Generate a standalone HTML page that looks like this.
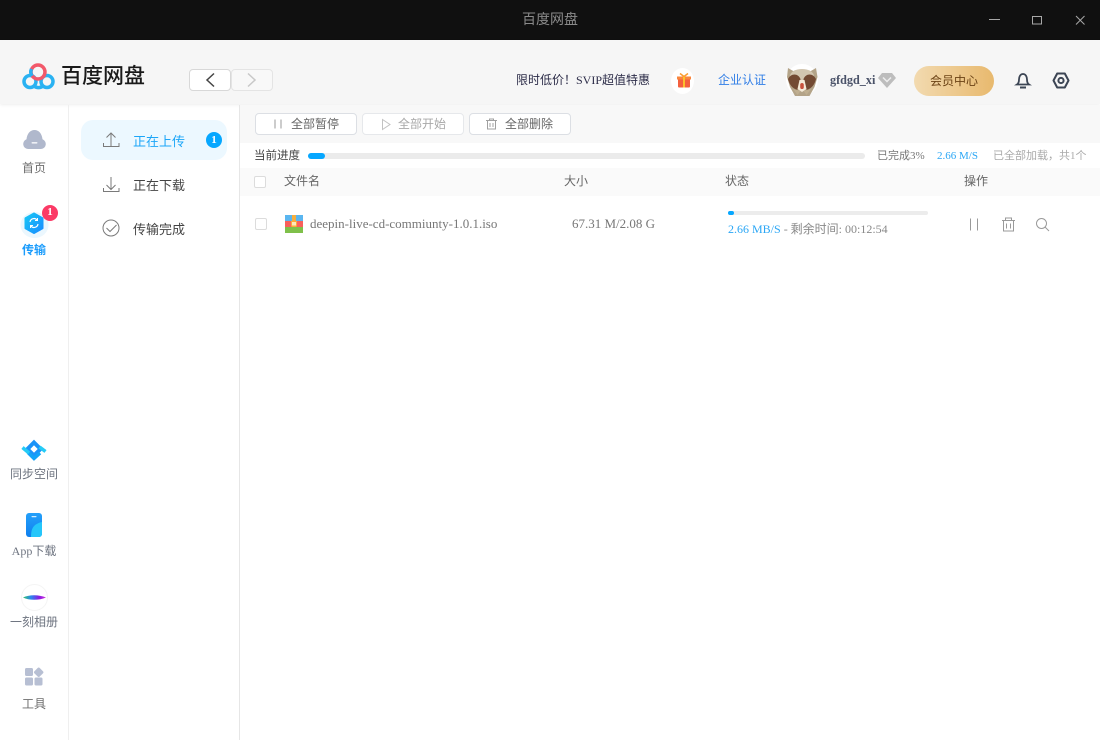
<!DOCTYPE html>
<html><head><meta charset="utf-8">
<style>
*{box-sizing:border-box;margin:0;padding:0}
html,body{width:1100px;height:740px;overflow:hidden;background:#fff}
body{position:relative;font-family:"Liberation Serif","Noto Sans CJK SC",serif;font-size:12px;color:#666}
.a{position:absolute;white-space:nowrap}
.t{position:absolute;white-space:nowrap;line-height:16px}
svg{position:absolute;overflow:visible}
.btn{position:absolute;top:113px;height:22px;width:102px;border:1px solid #dcdfe4;border-radius:4px;background:#fff}
.cb{position:absolute;width:12px;height:12px;border:1px solid #dcdcdc;border-radius:2px;background:#fff}
</style></head><body>
<!-- titlebar -->
<div class="a" style="left:0;top:0;width:1100px;height:40px;background:#101010"></div>
<div class="t" style="left:0;width:1100px;top:11px;text-align:center;font-size:14px;line-height:20px;color:#8a8a8a">百度网盘</div>
<svg style="left:0;top:0" width="1100" height="40" fill="none" stroke="#a8a8a8" stroke-width="1">
<path d="M989 19.500h11"/><rect x="1032.500" y="16.500" width="9" height="7.500"/><path d="M1076 16l8.500 8.500M1084.500 16l-8.500 8.500"/>
</svg>
<!-- header -->
<div class="a" style="left:0;top:40px;width:1100px;height:64px;background:#f6f6f6;box-shadow:0 1px 3px rgba(0,0,0,.07)"></div>
<svg style="left:0;top:0" width="70" height="100" fill="none">
<circle cx="30" cy="81.500" r="6" stroke="#2ab2f2" stroke-width="3.500"/>
<circle cx="47" cy="81.500" r="6" stroke="#2ab2f2" stroke-width="3.500"/>
<path d="M34 86a7 7 0 0 0 9 0" stroke="#2ab2f2" stroke-width="3.500"/>
<circle cx="38" cy="72" r="7" stroke="#f2596a" stroke-width="3.500"/>
<path d="M31.500 69a7 7 0 0 0 0.500 7" stroke="#2ab2f2" stroke-width="3.500"/>
</svg>
<div class="t" style="left:61px;top:61px;font-size:21px;line-height:28px;font-weight:500;color:#1a1a1a;font-family:'Noto Sans CJK SC',sans-serif">百度网盘</div>
<div class="a" style="left:189px;top:69px;width:42px;height:22px;background:#fff;border:1px solid #d8d8d8;border-radius:4px"></div>
<div class="a" style="left:231px;top:69px;width:42px;height:22px;background:#f8f8f8;border:1px solid #e4e4e4;border-radius:4px"></div>
<svg style="left:0;top:0" width="300" height="100" fill="none" stroke-width="1.500">
<path d="M214 73.500l-7 6.500 7 6.500" stroke="#444"/><path d="M248 73.500l7 6.500-7 6.500" stroke="#c8c8c8"/>
</svg>
<div class="t" style="left:516px;top:72px;color:#2c2c48;font-size:12px">限时低价！SVIP超值特惠</div>
<div class="a" style="left:671px;top:68px;width:23px;height:26px;border-radius:50%;background:#fff"></div>
<svg style="left:677px;top:73px" width="14" height="15" viewBox="0 0 14 15">
<rect x="1" y="4" width="12" height="10.500" rx="1" fill="#f4603e"/><rect x="0" y="3.500" width="14" height="3" fill="#f9863d"/><rect x="6" y="3" width="2" height="11.500" fill="#fbc02d"/>
<path d="M7 3.500L3 0.500M7 3.500L11 0.500" stroke="#fb9c2e" stroke-width="1.500"/>
</svg>
<div class="t" style="left:718px;top:72px;color:#2f7de6;font-size:12px">企业认证</div>
<div class="a" style="left:786px;top:64px;width:32px;height:32px;border-radius:50%;background:#fff"></div>
<svg style="left:786px;top:67px" width="32" height="29" viewBox="0 0 32 29">
<path d="M2 1l6 3.500h16L30 1l1.500 9-3 10-5 9H9l-5-9-3-10z" fill="#b3a388"/>
<ellipse cx="16" cy="9" rx="12" ry="7" fill="#d2c6b0"/>
<path d="M2 12c3-6 10-6 12.500 0l-1 9c-1 2-3 2-4.500 1C5 20 3 16 2 12zM30 12c-3-6-10-6-12.500 0l1 9c1 2 3 2 4.500 1 4-2 6-6 7-10z" fill="#734a33"/>
<path d="M13.500 13h5l2 9-4.500 3-4.500-3z" fill="#f4ead8"/><rect x="14.200" y="16" width="3.600" height="6" rx="1.800" fill="#c8523d"/>
<path d="M7 22l4.500 6 3-4M25 22l-4.500 6-3-4" fill="#bfae90"/>
</svg>
<div class="t" style="left:830px;top:72px;font-weight:700;color:#4a5268;font-size:12.200px">gfdgd_xi</div>
<svg style="left:878px;top:73px" width="18" height="15" viewBox="0 0 18 15"><path d="M4 0h10l4 5-9 10L0 5z" fill="#bdbdbd"/><path d="M5 4.500l4 4 4-4" fill="none" stroke="#eee" stroke-width="1.500"/></svg>
<div class="a" style="left:914px;top:66px;width:80px;height:30px;border-radius:15px;background:linear-gradient(90deg,#f2dab0,#e8b96e)"></div>
<div class="t" style="left:914px;width:80px;text-align:center;top:73px;color:#6b4215;font-size:12px">会员中心</div>
<svg style="left:1014px;top:71px" width="18" height="18" viewBox="0 0 18 18" fill="none" stroke="#3c4554" stroke-width="1.800">
<path d="M3 13.500h12c-1.500-1-2-2.500-2-5 0-3-1.500-5.500-4-5.500S5 5.500 5 8.500c0 2.500-.5 4-2 5z"/><path d="M6 16.500h6" stroke-width="2"/>
</svg>
<svg style="left:1052px;top:71px" width="18" height="18" viewBox="0 0 18 18" fill="none" stroke="#3c4554" stroke-width="2">
<path d="M5.200 2.500h7.600L16.500 9.500l-3.700 7H5.200L1.500 9.500z" stroke-linejoin="round"/><circle cx="9" cy="9.500" r="2.600"/>
</svg>
<!-- left nav -->
<div class="a" style="left:68px;top:105px;width:1px;height:635px;background:#efefef"></div>
<div class="a" style="left:239px;top:105px;width:1px;height:635px;background:#e6e6e6"></div>
<svg style="left:23px;top:129px" width="23" height="20" viewBox="0 0 23 20">
<path d="M5 20a5 5 0 0 1-1.500-9.700C4 5 7 1 11.500 1s7.500 4 8 9.300A5 5 0 0 1 18 20z" fill="#b0b8cc"/><rect x="8.500" y="13" width="6" height="1.600" rx=".8" fill="#eef0f5"/>
</svg>
<div class="t" style="left:0;width:68px;text-align:center;top:160px;color:#6e6e6e">首页</div>
<svg style="left:20px;top:208px" width="30" height="32" viewBox="0 0 30 32" fill="none">
<defs><linearGradient id="g1" x1="0" y1="0" x2="1" y2="1"><stop offset="0" stop-color="#17c7f5"/><stop offset="1" stop-color="#1a8cff"/></linearGradient></defs>
<ellipse cx="14.500" cy="17" rx="14" ry="13" fill="#d8effe" opacity=".5"/>
<path d="M14 5.500l8.500 4.800v10L14 25l-8.500-4.700v-10z" fill="url(#g1)" stroke="url(#g1)" stroke-width="2" stroke-linejoin="round"/>
<path d="M10 14a4 4 0 0 1 7.200-1.800M18 16a4 4 0 0 1-7.200 1.800" stroke="#fff" stroke-width="1.200"/>
<path d="M17.500 10v2.500H15M10.500 20v-2.500H13" stroke="#fff" stroke-width="1"/>
</svg>
<div class="a" style="left:42px;top:205px;width:16px;height:16px;border-radius:50%;background:#fb3a66;color:#fff;text-align:center;font-size:11px;line-height:15px;font-weight:700">1</div>
<div class="t" style="left:0;width:68px;text-align:center;top:242px;color:#1b9cfc;font-weight:700">传输</div>
<svg style="left:0;top:430px" width="68" height="40" fill="none">
<path d="M34 12.500l6.500 6.500-6.500 6.500-6.500-6.500z" stroke="#1b93f8" stroke-width="4" stroke-linejoin="miter"/>
<path d="M28 22.500l6 6 6-5.500" stroke="#12a3f8" stroke-width="3.500"/>
<path d="M22.500 17.500l6.500 5.500" stroke="#25cbf6" stroke-width="3.500"/>
<path d="M45.500 21.500l-6-4.500" stroke="#25cbf6" stroke-width="3.500"/>
</svg>
<div class="t" style="left:0;width:68px;text-align:center;top:466px;color:#6e7480">同步空间</div>
<svg style="left:25px;top:513px" width="18" height="24" viewBox="0 0 18 24">
<defs><linearGradient id="g3" x1="0" y1="0" x2="0" y2="1"><stop offset="0" stop-color="#24a0fa"/><stop offset="1" stop-color="#0f7fee"/></linearGradient></defs>
<rect x="1" y="0" width="16" height="24" rx="3" fill="url(#g3)"/><path d="M6 24c0-8 2-13 11-15v12a3 3 0 0 1-3 3z" fill="#25c6fa"/><rect x="6.500" y="3" width="5" height="1.200" rx=".6" fill="#cfeeff"/>
</svg>
<div class="t" style="left:0;width:68px;text-align:center;top:543px;color:#6e7480">App下载</div>
<div class="a" style="left:21px;top:584px;width:27px;height:27px;border-radius:50%;background:#fff;border:1px solid #f4f4f4"></div>
<svg style="left:23px;top:593px" width="23" height="9" viewBox="0 0 23 9">
<defs><linearGradient id="g4" x1="0" y1="0" x2="1" y2="0"><stop offset="0" stop-color="#32c46a"/><stop offset=".35" stop-color="#2a86f0"/><stop offset=".7" stop-color="#8a1ce0"/><stop offset="1" stop-color="#d02ee0"/></linearGradient></defs>
<path d="M0 4.500C6 1.500 16 1.500 23 4.500 16 7.500 6 7.500 0 4.500z" fill="url(#g4)"/>
</svg>
<div class="t" style="left:0;width:68px;text-align:center;top:614px;color:#6e7480">一刻相册</div>
<svg style="left:25px;top:667px" width="19" height="19" viewBox="0 0 19 19" fill="#b7bfd3">
<rect x="0" y="1" width="8" height="8" rx="1.500"/><rect x="0" y="10.500" width="8" height="8" rx="1.500"/><rect x="9.500" y="10.500" width="8" height="8" rx="1.500"/><rect x="10" y="1.500" width="7.500" height="7.500" rx="1.500" transform="rotate(45 13.700 5.200)"/>
</svg>
<div class="t" style="left:0;width:68px;text-align:center;top:696px;color:#6e6e6e">工具</div>
<!-- sub nav -->
<div class="a" style="left:81px;top:120px;width:146px;height:40px;border-radius:12px;background:#ecf8ff"></div>
<svg style="left:0;top:0" width="130" height="240" fill="none" stroke="#7a7a7a" stroke-width="1">
<path d="M111 146v-12.500M106.500 137.500l4.500-4.500 4.500 4.500M103.500 143v3.500h15.500V143"/>
<path d="M111 177v12.500M106.500 185l4.500 4.500 4.500-4.500M103.500 188v3.500h15.500V188" />
<circle cx="111" cy="228" r="8"/><path d="M106.500 228l3.500 3.500 6.500-6.500"/>
</svg>
<div class="t" style="left:133px;top:133px;font-size:13px;color:#1ca6f8;line-height:18px">正在上传</div>
<div class="a" style="left:206px;top:132px;width:16px;height:16px;border-radius:50%;background:#06a7ff;color:#fff;text-align:center;font-size:11px;line-height:16px;font-weight:700">1</div>
<div class="t" style="left:133px;top:177px;font-size:13px;color:#444;line-height:18px">正在下载</div>
<div class="t" style="left:133px;top:221px;font-size:13px;color:#444;line-height:18px">传输完成</div>
<!-- toolbar -->
<div class="a" style="left:240px;top:105px;width:860px;height:38px;background:#f8f8f8"></div>
<div class="btn" style="left:255px"></div><div class="btn" style="left:362px;border-color:#e6e8eb"></div><div class="btn" style="left:469px"></div>
<svg style="left:0;top:0" width="520" height="140" fill="none">
<path d="M275 119.500v9M281 119.500v9" stroke="#9a9a9a"/>
<path d="M382.500 119.500l7.500 5-7.500 5z" stroke="#c2c2c2"/>
<path d="M486 120.500h11M489.500 120.500v-1.500h4v1.500M487.500 120.500v8.500h8v-8.500M490 123v4M493 123v4" stroke="#a0a0a0"/>
</svg>
<div class="t" style="left:291px;top:116px;color:#666">全部暂停</div>
<div class="t" style="left:398px;top:116px;color:#a8a8a8">全部开始</div>
<div class="t" style="left:505px;top:116px;color:#666">全部删除</div>
<!-- progress -->
<div class="t" style="left:254px;top:148px;color:#444;font-size:11.500px">当前进度</div>
<div class="a" style="left:308px;top:153px;width:557px;height:6px;border-radius:3px;background:#ebebeb"></div>
<div class="a" style="left:308px;top:153px;width:17px;height:6px;border-radius:3px;background:#06a7ff"></div>
<div class="t" style="left:877px;top:148px;font-size:11px;color:#777">已完成3%</div>
<div class="t" style="left:937px;top:148px;font-size:11px;color:#2aa6f5">2.66 M/S</div>
<div class="t" style="left:993px;top:148px;font-size:11px;color:#aaa">已全部加载，共1个</div>
<!-- table header -->
<div class="a" style="left:240px;top:168px;width:860px;height:28px;background:#fafafa"></div>
<div class="cb" style="left:254px;top:176px"></div>
<div class="t" style="left:284px;top:173px;color:#666">文件名</div>
<div class="t" style="left:564px;top:173px;color:#666">大小</div>
<div class="t" style="left:725px;top:173px;color:#666">状态</div>
<div class="t" style="left:964px;top:173px;color:#666">操作</div>
<!-- row -->
<div class="cb" style="left:255px;top:218px"></div>
<svg style="left:285px;top:215px" width="18" height="18" viewBox="0 0 18 18">
<rect width="18" height="6" fill="#5ab6f0"/><rect y="6" width="18" height="6" fill="#f8605c"/><rect y="12" width="18" height="6" fill="#7fc04a"/><rect x="7" width="4" height="12" fill="#f7ae3e"/><rect x="6.500" y="6.500" width="5" height="4.500" fill="#fde9bc" stroke="#f7ae3e"/>
</svg>
<div class="t" style="left:310px;top:216px;font-size:13px;color:#777">deepin-live-cd-commiunty-1.0.1.iso</div>
<div class="t" style="left:572px;top:216px;font-size:13px;color:#777">67.31 M/2.08 G</div>
<div class="a" style="left:728px;top:211px;width:200px;height:4px;border-radius:2px;background:#ececec"></div>
<div class="a" style="left:728px;top:211px;width:6px;height:4px;border-radius:2px;background:#06a7ff"></div>
<div class="t" style="left:728px;top:221px;color:#888"><span style="color:#2aa6f5">2.66 MB/S</span> - 剩余时间: 00:12:54</div>
<svg style="left:0;top:0" width="1100" height="240" fill="none" stroke="#9a9a9a" stroke-width="1">
<path d="M970.500 218.500v12M977.500 218.500v12"/>
<path d="M1002 220.500h13M1005.500 220.500v-2.500h6v2.500M1003.500 220.500v10.500h10v-10.500M1006.500 223.500v5M1010.500 223.500v5"/>
<circle cx="1041.500" cy="223.500" r="5"/><path d="M1045 227l4 4"/>
</svg>
</body></html>
